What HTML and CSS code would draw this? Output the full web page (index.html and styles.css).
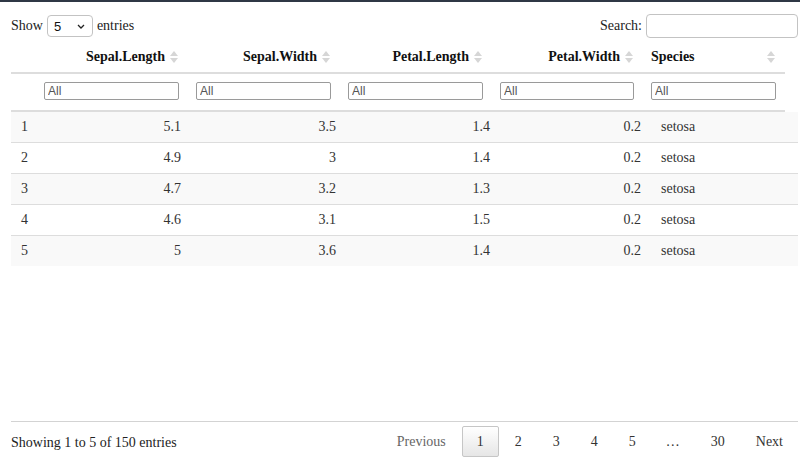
FILE: index.html
```html
<!DOCTYPE html>
<html lang="en">
<head>
<meta charset="utf-8">
<title>iris</title>
<link rel="stylesheet" href="styles.css">
</head>
<body>
<div class="wrapper">
  <div class="toolbar">
    <label class="length">Show
      <span class="select-wrap">
        <select class="length-select"><option>5</option><option>10</option><option>25</option></select>
        <svg class="chev" width="8" height="5" viewBox="0 0 8 5"><path d="M1 1 L4 4 L7 1" fill="none" stroke="#222" stroke-width="1.3"/></svg>
      </span>
      entries</label>
    <label class="search">Search:<input class="search-input" type="search"></label>
  </div>

  <table class="head-table">
    <colgroup>
      <col style="width:23px"><col style="width:152px"><col style="width:152px"><col style="width:152px"><col style="width:151px"><col style="width:144px">
    </colgroup>
    <thead>
      <tr class="title-row">
        <th class="idx"></th>
        <th class="num">Sepal.Length<svg class="sort" width="8" height="14" viewBox="0 0 8 14"><polygon points="0,6 4,1 8,6" /><polygon points="0,8 4,13 8,8" /></svg></th>
        <th class="num">Sepal.Width<svg class="sort" width="8" height="14" viewBox="0 0 8 14"><polygon points="0,6 4,1 8,6" /><polygon points="0,8 4,13 8,8" /></svg></th>
        <th class="num">Petal.Length<svg class="sort" width="8" height="14" viewBox="0 0 8 14"><polygon points="0,6 4,1 8,6" /><polygon points="0,8 4,13 8,8" /></svg></th>
        <th class="num">Petal.Width<svg class="sort" width="8" height="14" viewBox="0 0 8 14"><polygon points="0,6 4,1 8,6" /><polygon points="0,8 4,13 8,8" /></svg></th>
        <th class="txt">Species<svg class="sort" width="8" height="14" viewBox="0 0 8 14"><polygon points="0,6 4,1 8,6" /><polygon points="0,8 4,13 8,8" /></svg></th>
      </tr>
      <tr class="filter-row">
        <td></td>
        <td><input class="filter" type="search" placeholder="All"></td>
        <td><input class="filter" type="search" placeholder="All"></td>
        <td><input class="filter" type="search" placeholder="All"></td>
        <td><input class="filter" type="search" placeholder="All"></td>
        <td><input class="filter" type="search" placeholder="All"></td>
      </tr>
    </thead>
  </table>

  <div class="scroll-body">
    <table class="body-table">
      <colgroup>
        <col style="width:25px"><col style="width:155px"><col style="width:155px"><col style="width:154px"><col style="width:151px"><col style="width:147px">
      </colgroup>
      <tbody>
        <tr><td class="idx">1</td><td class="num">5.1</td><td class="num">3.5</td><td class="num">1.4</td><td class="num">0.2</td><td class="txt">setosa</td></tr>
        <tr><td class="idx">2</td><td class="num">4.9</td><td class="num">3</td><td class="num">1.4</td><td class="num">0.2</td><td class="txt">setosa</td></tr>
        <tr><td class="idx">3</td><td class="num">4.7</td><td class="num">3.2</td><td class="num">1.3</td><td class="num">0.2</td><td class="txt">setosa</td></tr>
        <tr><td class="idx">4</td><td class="num">4.6</td><td class="num">3.1</td><td class="num">1.5</td><td class="num">0.2</td><td class="txt">setosa</td></tr>
        <tr><td class="idx">5</td><td class="num">5</td><td class="num">3.6</td><td class="num">1.4</td><td class="num">0.2</td><td class="txt">setosa</td></tr>
      </tbody>
    </table>
  </div>

  <div class="footer">
    <div class="info">Showing 1 to 5 of 150 entries</div>
    <div class="paginate">
      <a class="pbtn disabled">Previous</a>
      <a class="pbtn current">1</a>
      <a class="pbtn">2</a>
      <a class="pbtn">3</a>
      <a class="pbtn">4</a>
      <a class="pbtn">5</a>
      <span class="ellipsis">…</span>
      <a class="pbtn">30</a>
      <a class="pbtn">Next</a>
    </div>
  </div>
</div>
</body>
</html>
```

FILE: styles.css
```css
* { box-sizing: border-box; }

html, body {
  margin: 0;
  padding: 0;
  background: #fff;
}

body {
  border-top: 2px solid #2f3845;
  font-family: "Liberation Serif", "Times New Roman", serif;
  font-size: 14px;
  color: #333;
}

.wrapper {
  padding: 0 2px 0 11px;
}

.toolbar {
  display: flex;
  justify-content: space-between;
  align-items: flex-end;
  height: 39px;
  padding-bottom: 3px;
}

.length {
  display: flex;
  align-items: center;
  gap: 4px;
  color: #222;
  margin-bottom: 1px;
}

.select-wrap {
  position: relative;
  display: inline-block;
  height: 22px;
}

.length-select {
  appearance: none;
  -webkit-appearance: none;
  width: 46px;
  height: 22px;
  border: 1px solid #c3c3c3;
  border-radius: 4px;
  background: #fff;
  padding: 0 0 0 6px;
  font-family: "Liberation Sans", Arial, sans-serif;
  font-size: 13px;
  color: #111;
  margin: 0;
}

.chev {
  position: absolute;
  right: 8px;
  top: 9px;
  pointer-events: none;
}

.search {
  display: flex;
  align-items: center;
  gap: 4px;
  color: #222;
}

.search-input {
  width: 152px;
  height: 24px;
  border: 1px solid #c3c3c3;
  border-radius: 4px;
  margin: 0;
  padding: 0 4px;
  background: #fff;
}

table {
  border-collapse: collapse;
  table-layout: fixed;
  border-spacing: 0;
}

.head-table {
  width: 774px;
}

.title-row th {
  position: relative;
  height: 32px;
  padding: 0 21px 0 10px;
  font-weight: bold;
  color: #111;
  text-align: right;
  vertical-align: middle;
  border-bottom: 2px solid #ddd;
  white-space: nowrap;
}

.title-row th.txt {
  text-align: left;
}

.title-row th.idx {
  padding: 0;
}

.sort {
  position: absolute;
  right: 8px;
  top: 9px;
  fill: #d6d6d6;
}

.title-row th.txt .sort {
  right: 10px;
}

.filter-row td {
  height: 36px;
  padding: 8px 7px 10px 10px;
  vertical-align: top;
  border-bottom: 2px solid #ddd;
}

.filter-row td:last-child {
  padding-right: 9px;
}

.filter {
  display: block;
  width: 100%;
  height: 18px;
  margin: 0;
  padding: 0 3px;
  border: 1px solid #9a9a9a;
  border-radius: 2px;
  font-family: "Liberation Sans", Arial, sans-serif;
  font-size: 12px;
  color: #444;
  background: #fff;
}

.filter::placeholder {
  color: #555;
  opacity: 1;
}

.scroll-body {
  height: 309px;
}

.body-table {
  width: 787px;
}

.body-table td {
  height: 30px;
  padding: 0 10px;
  vertical-align: middle;
  color: #333;
  white-space: nowrap;
}

.body-table tr + tr td {
  border-top: 1px solid #ddd;
  height: 31px;
}

.body-table tr:nth-child(odd) td {
  background: #f9f9f9;
}

.body-table td.num {
  text-align: right;
}

.body-table td.txt,
.body-table td.idx {
  text-align: left;
}

.footer {
  border-top: 1px solid #d3d3d3;
  display: flex;
  justify-content: space-between;
  align-items: flex-start;
  height: 41px;
}

.info {
  padding-top: 13px;
  color: #222;
}

.paginate {
  display: flex;
  align-items: center;
  padding-top: 4px;
}

.pbtn {
  display: inline-block;
  min-width: 21px;
  padding: 7px 14px;
  line-height: 15px;
  margin-left: 1px;
  text-align: center;
  border: 1px solid transparent;
  border-radius: 2px;
  color: #333;
  cursor: pointer;
}

.pbtn.disabled {
  color: #666;
}

.pbtn.current {
  border-color: #c6c6c6;
  background: linear-gradient(to bottom, #ffffff 0%, #e6e6e6 100%);
}

.ellipsis {
  display: inline-block;
  padding: 0 15px;
  line-height: 15px;
  color: #333;
}
```
